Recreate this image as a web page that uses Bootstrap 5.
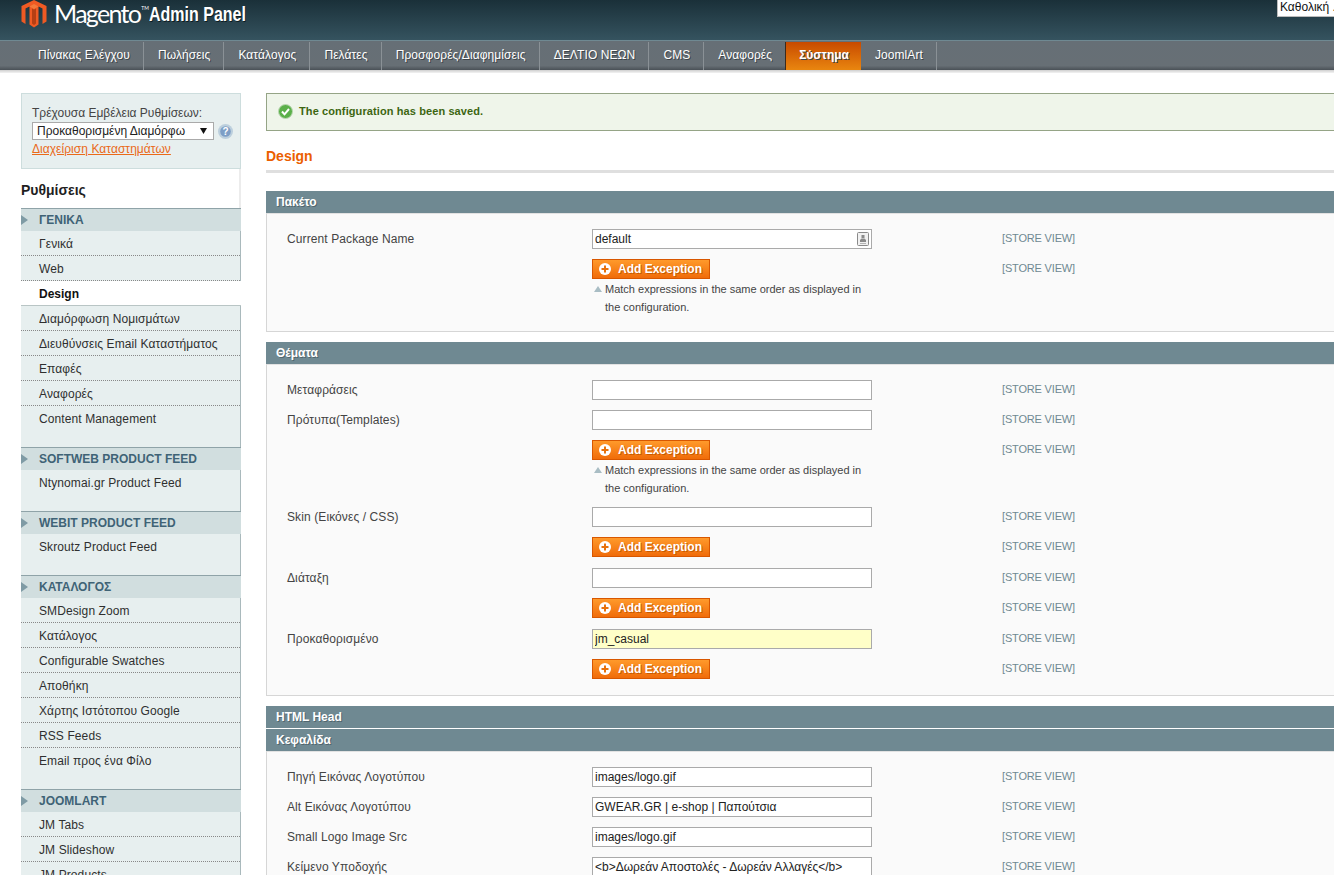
<!doctype html>
<html lang="el"><head><meta charset="utf-8">
<title>Magento Admin</title>
<link href="https://cdn.jsdelivr.net/npm/bootstrap@5.3.0/dist/css/bootstrap.min.css" rel="stylesheet">
<style>
html,body{height:875px;overflow:hidden;background:#fff}
body{font-family:"Liberation Sans",Arial,sans-serif;font-size:12px;color:#2f2f2f;line-height:16px}
.hdr{height:41px;background:linear-gradient(#1a3039,#35535f);border-bottom:1px solid #6f8992;padding-left:21px;position:relative}
.brand{color:#fff;font-family:Lato,sans-serif;font-size:25px;font-weight:400;letter-spacing:-1.7px;line-height:26px;margin-left:7px;white-space:nowrap}
.brand sup{font-size:5px;top:-13px;letter-spacing:0;margin-left:1px}
.panel{color:#fff;font-weight:700;font-size:20px;line-height:28px;margin-left:0;text-shadow:1px 1px 0 #0c1c22;display:inline-block;transform:scaleX(.8);transform-origin:left center;white-space:nowrap}
.globe{position:absolute;right:0;top:0;width:57px;height:17px;background:#fff;border-left:1px solid #bbb;border-bottom:1px solid #bbb;color:#111;font-size:12px;line-height:15px;padding-left:2px;white-space:nowrap;overflow:hidden}
.menu-bar{height:29px;background:linear-gradient(#666f76,#676f75 85%,#4a5157);padding-left:24px}
.menu-bar a{display:block;height:28px;margin-top:1px;padding:0 13px 0 14px;border-right:1px solid #8a9196;color:#fff;text-decoration:none;line-height:26px;font-size:12px;letter-spacing:.085px;text-shadow:1px 1px 0 #3d454b}
.menu-bar a.on{background:linear-gradient(#c84a00,#e9860f);font-weight:700;border-left:1px solid #3c2a1c;border-right:0;padding:0 12px 0 13px;letter-spacing:0}
.menu-bar a.pre{border-right:0}
.sub-shadow{height:3px;background:linear-gradient(#cfcfcf,#f3f3f3)}
.page-wrap{padding:20px 0 0 21px;width:1400px}
.side{width:220px;flex:none}
.scope-box{height:76px;background:#e7efef;border:1px solid #cddddd;padding:11px 10px 0;color:#444}
.scope-box .form-select{width:182px;flex:none;height:18px;padding:0 0 0 4px;border:1px solid #aaa;border-radius:0;font-size:12px;line-height:15px;color:#222;background-position:right 6px center;background-size:7px 6px;background-image:url("data:image/svg+xml,%3Csvg xmlns='http://www.w3.org/2000/svg' viewBox='0 0 7 6'%3E%3Cpath d='M0 0h7L3.500 6z' fill='%23111'/%3E%3C/svg%3E")}
.scope-row{height:18px;margin-top:1px;margin-bottom:1px}
.scope-box a{color:#ea6a1a;display:block;line-height:17px;letter-spacing:.05px}
.side-title{height:39px;font-size:14px;font-weight:700;color:#1f1f1f;line-height:42px;border-right:2px solid #ececec}
.side-head{height:23px;background:#d1dedf;border-top:1px solid #8fa3a8;color:#3f6376;font-weight:700;line-height:22px;padding-left:18px;position:relative}
.side-head:before{content:"";position:absolute;left:0;top:6px;border-left:7px solid #7f9ba5;border-top:5px solid transparent;border-bottom:5px solid transparent}
.side-list{background:#e7efef;border-right:1px solid #a9b9bc}
.side-list a{display:block;height:25px;line-height:26px;padding-left:18px;color:#2f2f2f;text-decoration:none;border-bottom:1px dotted #888;letter-spacing:.1px}
.side-list a:last-child{height:41px;border-bottom:0}
.side-list a.cur{background:#fff;font-weight:700;color:#111;border-bottom:1px solid #b9c5c5;margin-right:-1px;letter-spacing:0}
.main-col{width:1100px;flex:none;margin-left:25px}
.saved{height:38px;background:#eff5ea;border:1px solid #95a486;color:#3d6611;font-weight:700;font-size:11px;padding:0 0 2px 11px;letter-spacing:.1px;gap:6px}
.page-title{height:42px;padding-top:17px;border-bottom:3px solid #dfdfdf;color:#eb5e00;font-weight:700;font-size:14px;line-height:16px;margin-bottom:18px}
.sec-head{height:22px;background:#6f8992;color:#fff;font-weight:700;padding-left:10px;line-height:23px;text-shadow:1px 1px 0 #51666e}
.sec-head+.sec-head{margin-top:1px}
.sec-body{background:#fafafa;border:1px solid #d6d6d6;border-top-color:#e2e2e2;padding:15px 20px 5px;margin-bottom:10px;color:#444}
.cfg-row{display:flex;margin-bottom:10px;min-height:20px}
.cfg-label{width:305px;flex:none;line-height:20px;letter-spacing:.1px}
.cfg-val{width:410px;flex:none}
.cfg-scope{font-size:11px;color:#6f8992;line-height:19px;letter-spacing:-.17px}
.cfg-val .form-control{width:280px;height:20px;padding:0 2px;border:1px solid #aaa;border-radius:0;font-size:12px;line-height:16px;color:#222;box-shadow:none}
.cfg-val .form-control.hl{background:#ffffc8}
.with-id{position:relative;width:280px}
.with-id svg{position:absolute;right:3px;top:3px}
.add-btn{display:inline-flex;align-items:center;width:118px;height:20px;padding:0 0 0 6px;border:1px solid #d85700;border-radius:0;background:linear-gradient(#ff9a2b,#f06c0a);color:#fff;font-weight:700;font-size:12px;line-height:16px;text-shadow:1px 1px 0 #c85a00;gap:7px;margin-bottom:1px}
.add-btn:hover{background:#f06c0a;color:#fff;border-color:#d85700}
.note{width:280px;font-size:11px;line-height:18px;padding-left:13px;position:relative;color:#444;height:36px}
.note:before{content:"";position:absolute;left:2px;top:6px;border-bottom:6px solid #a9bdc4;border-left:4px solid transparent;border-right:4px solid transparent}
</style></head>
<body>
<header class="hdr d-flex align-items-start">
  <svg width="26" height="28" viewBox="0 0 26 28"><path fill="#ef5a23" d="M13 0 25.500 6V21.500L21.500 24V8.500L17.500 6.500V24.500L13 27.500 8.500 24.500V6.500L4.500 8.500V24L.5 21.500V6Z"/><path fill="#f47a3a" d="M8.500 6.500 13 9 17.500 6.500 13 4Z"/><path fill="#b53f14" d="M11 8.500 13 9.500 15 8.500V23.500L13 25 11 23.500Z"/></svg>
  <span class="brand">Magento<sup>TM</sup></span>
  <span class="panel">Admin Panel</span>
  <div class="globe">Καθολική ...</div>
</header>
<nav class="menu-bar d-flex">
  <a href="#">Πίνακας Ελέγχου</a><a href="#">Πωλήσεις</a><a href="#">Κατάλογος</a><a href="#">Πελάτες</a><a href="#">Προσφορές/Διαφημίσεις</a><a href="#">ΔΕΛΤΙΟ ΝΕΩΝ</a><a href="#">CMS</a><a href="#" class="pre">Αναφορές</a><a href="#" class="on">Σύστημα</a><a href="#">JoomlArt</a>
</nav>
<div class="sub-shadow"></div>
<div class="page-wrap d-flex align-items-start">
  <aside class="side">
    <div class="scope-box">
      <div>Τρέχουσα Εμβέλεια Ρυθμίσεων:</div>
      <div class="scope-row d-flex align-items-center">
        <select class="form-select" aria-label="Εμβέλεια"><option>Προκαθορισμένη Διαμόρφω</option></select>
        <svg width="15" height="15" viewBox="0 0 15 15" class="ms-1 flex-shrink-0"><circle cx="7.500" cy="7.500" r="7.500" fill="#bccfdd"/><circle cx="7.500" cy="7.500" r="5.300" fill="#7d9ec6"/><text x="7.500" y="11" text-anchor="middle" font-size="10" font-weight="700" fill="#fff" font-family="Liberation Sans">?</text></svg>
      </div>
      <a href="#">Διαχείριση Καταστημάτων</a>
    </div>
    <div class="side-title">Ρυθμίσεις</div>
    <div class="side-head">ΓΕΝΙΚΑ</div>
    <div class="side-list"><a href="#">Γενικά</a><a href="#">Web</a><a href="#" class="cur">Design</a><a href="#">Διαμόρφωση Νομισμάτων</a><a href="#">Διευθύνσεις Email Καταστήματος</a><a href="#">Επαφές</a><a href="#">Αναφορές</a><a href="#">Content Management</a></div>
    <div class="side-head">SOFTWEB PRODUCT FEED</div>
    <div class="side-list"><a href="#">Ntynomai.gr Product Feed</a></div>
    <div class="side-head">WEBIT PRODUCT FEED</div>
    <div class="side-list"><a href="#">Skroutz Product Feed</a></div>
    <div class="side-head">ΚΑΤΑΛΟΓΟΣ</div>
    <div class="side-list"><a href="#">SMDesign Zoom</a><a href="#">Κατάλογος</a><a href="#">Configurable Swatches</a><a href="#">Αποθήκη</a><a href="#">Χάρτης Ιστότοπου Google</a><a href="#">RSS Feeds</a><a href="#">Email προς ένα Φίλο</a></div>
    <div class="side-head">JOOMLART</div>
    <div class="side-list"><a href="#">JM Tabs</a><a href="#">JM Slideshow</a><a href="#">JM Products</a></div>
  </aside>
  <main class="main-col">
    <div class="saved d-flex align-items-center">
      <svg width="15" height="15" viewBox="0 0 15 15"><circle cx="7.500" cy="7.500" r="7" fill="#5bb04a" stroke="#bcd8b4"/><path d="M4 7.500 6.500 10.300 11 5" fill="none" stroke="#fff" stroke-width="2"/></svg>
      <span>The configuration has been saved.</span>
    </div>
    <div class="page-title">Design</div>

    <div class="sec-head">Πακέτο</div>
    <div class="sec-body">
      <div class="cfg-row"><div class="cfg-label">Current Package Name</div><div class="cfg-val"><div class="with-id"><input class="form-control" value="default" aria-label="Package"><svg width="12" height="14" viewBox="0 0 12 14"><rect x=".5" y=".5" width="11" height="13" rx="1" fill="#f1f1f1" stroke="#8a8a8a"/><rect x="4.500" y="3" width="3" height="3" fill="#8a8a8a"/><path d="M3 10V8L4.500 6.500H7.500L9 8V10Z" fill="#8a8a8a"/><path d="M3 11.500H9" stroke="#b5b5b5"/></svg></div></div><div class="cfg-scope">[STORE VIEW]</div></div>
      <div class="cfg-row"><div class="cfg-label"></div><div class="cfg-val"><button class="btn add-btn" type="button"><svg width="12" height="12" viewBox="0 0 12 12"><circle cx="6" cy="6" r="6" fill="#fff"/><path d="M6 2.500V9.500M2.500 6H9.500" stroke="#e8720c" stroke-width="2"/></svg>Add Exception</button><div class="note">Match expressions in the same order as displayed in the configuration.</div></div><div class="cfg-scope">[STORE VIEW]</div></div>
    </div>

    <div class="sec-head">Θέματα</div>
    <div class="sec-body">
      <div class="cfg-row"><div class="cfg-label">Μεταφράσεις</div><div class="cfg-val"><input class="form-control" aria-label="Μεταφράσεις"></div><div class="cfg-scope">[STORE VIEW]</div></div>
      <div class="cfg-row"><div class="cfg-label">Πρότυπα(Templates)</div><div class="cfg-val"><input class="form-control" aria-label="Πρότυπα"></div><div class="cfg-scope">[STORE VIEW]</div></div>
      <div class="cfg-row"><div class="cfg-label"></div><div class="cfg-val"><button class="btn add-btn" type="button"><svg width="12" height="12" viewBox="0 0 12 12"><circle cx="6" cy="6" r="6" fill="#fff"/><path d="M6 2.500V9.500M2.500 6H9.500" stroke="#e8720c" stroke-width="2"/></svg>Add Exception</button><div class="note">Match expressions in the same order as displayed in the configuration.</div></div><div class="cfg-scope">[STORE VIEW]</div></div>
      <div class="cfg-row"><div class="cfg-label">Skin (Εικόνες / CSS)</div><div class="cfg-val"><input class="form-control" aria-label="Skin"></div><div class="cfg-scope">[STORE VIEW]</div></div>
      <div class="cfg-row"><div class="cfg-label"></div><div class="cfg-val"><button class="btn add-btn" type="button"><svg width="12" height="12" viewBox="0 0 12 12"><circle cx="6" cy="6" r="6" fill="#fff"/><path d="M6 2.500V9.500M2.500 6H9.500" stroke="#e8720c" stroke-width="2"/></svg>Add Exception</button></div><div class="cfg-scope">[STORE VIEW]</div></div>
      <div class="cfg-row"><div class="cfg-label">Διάταξη</div><div class="cfg-val"><input class="form-control" aria-label="Διάταξη"></div><div class="cfg-scope">[STORE VIEW]</div></div>
      <div class="cfg-row"><div class="cfg-label"></div><div class="cfg-val"><button class="btn add-btn" type="button"><svg width="12" height="12" viewBox="0 0 12 12"><circle cx="6" cy="6" r="6" fill="#fff"/><path d="M6 2.500V9.500M2.500 6H9.500" stroke="#e8720c" stroke-width="2"/></svg>Add Exception</button></div><div class="cfg-scope">[STORE VIEW]</div></div>
      <div class="cfg-row"><div class="cfg-label">Προκαθορισμένο</div><div class="cfg-val"><input class="form-control hl" value="jm_casual" aria-label="Προκαθορισμένο"></div><div class="cfg-scope">[STORE VIEW]</div></div>
      <div class="cfg-row"><div class="cfg-label"></div><div class="cfg-val"><button class="btn add-btn" type="button"><svg width="12" height="12" viewBox="0 0 12 12"><circle cx="6" cy="6" r="6" fill="#fff"/><path d="M6 2.500V9.500M2.500 6H9.500" stroke="#e8720c" stroke-width="2"/></svg>Add Exception</button></div><div class="cfg-scope">[STORE VIEW]</div></div>
    </div>

    <div class="sec-head">HTML Head</div>
    <div class="sec-head">Κεφαλίδα</div>
    <div class="sec-body">
      <div class="cfg-row"><div class="cfg-label">Πηγή Εικόνας Λογοτύπου</div><div class="cfg-val"><input class="form-control" value="images/logo.gif" aria-label="Λογότυπο"></div><div class="cfg-scope">[STORE VIEW]</div></div>
      <div class="cfg-row"><div class="cfg-label">Alt Εικόνας Λογοτύπου</div><div class="cfg-val"><input class="form-control" value="GWEAR.GR | e-shop | Παπούτσια" aria-label="Alt"></div><div class="cfg-scope">[STORE VIEW]</div></div>
      <div class="cfg-row"><div class="cfg-label">Small Logo Image Src</div><div class="cfg-val"><input class="form-control" value="images/logo.gif" aria-label="Small logo"></div><div class="cfg-scope">[STORE VIEW]</div></div>
      <div class="cfg-row"><div class="cfg-label">Κείμενο Υποδοχής</div><div class="cfg-val"><input class="form-control" value="&lt;b&gt;Δωρεάν Αποστολές - Δωρεάν Αλλαγές&lt;/b&gt;" aria-label="Υποδοχή"></div><div class="cfg-scope">[STORE VIEW]</div></div>
    </div>
  </main>
</div>
<script src="https://cdn.jsdelivr.net/npm/bootstrap@5.3.0/dist/js/bootstrap.bundle.min.js"></script>
</body></html>
